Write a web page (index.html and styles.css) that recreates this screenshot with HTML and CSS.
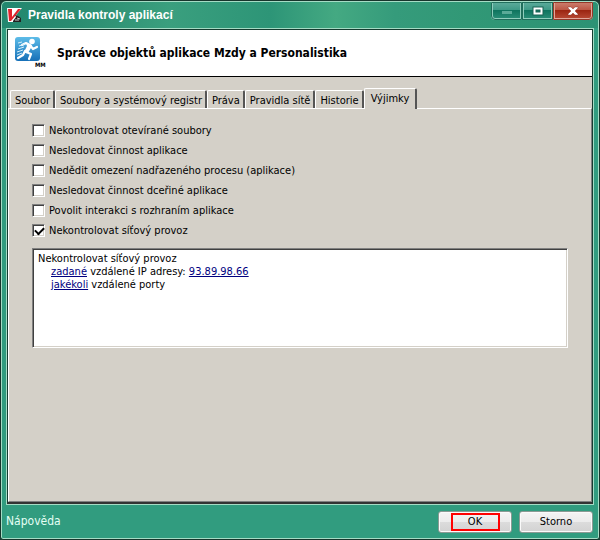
FILE: index.html
```html
<!DOCTYPE html>
<html lang="cs">
<head>
    <meta charset="UTF-8">
    <meta name="viewport" content="width=device-width, initial-scale=1.0">
    <title>Pravidla kontroly aplikací</title>
    <link rel="stylesheet" href="styles.css">
</head>
<body>
    <div class="window">
        <header class="titlebar">
            <svg class="logo" viewBox="0 0 16 16" aria-hidden="true">
                <path d="M0 1h15L9 8l5 7H1z" fill="#fff"/>
                <path d="M1 2h4v8l6-8h3L4 14H2z" fill="#e0222c"/>
                <path d="M6 14l3-4-1-2 3 1 3 2v4H6z" fill="#222"/>
                <path d="M10 11l3 1M8 13h4" stroke="#ccc" fill="none"/>
            </svg>
            <h1>Pravidla kontroly aplikací</h1>
            <div class="window-buttons">
                <button type="button" class="minimize" aria-label="Minimalizovat" disabled>
                    <svg viewBox="0 0 12 10"><path d="M1 5h10v3H1z" fill="#5aaa98"/></svg>
                </button>
                <button type="button" class="maximize" aria-label="Maximalizovat">
                    <svg viewBox="0 0 12 10"><path d="M2.5 2.5h7v5h-7z" fill="none" stroke="#1b6355" stroke-width="4"/><path d="M2.5 2.5h7v5h-7z" fill="none" stroke="#fff" stroke-width="2"/></svg>
                </button>
                <button type="button" class="close" aria-label="Zavřít">
                    <svg viewBox="0 0 12 10"><path d="M1 1h3l2 2 2-2h3v1L8 5l3 3v1H8L6 7 4 9H1V8l3-3-3-3z" fill="#fff" stroke="#7d2418" stroke-width=".4"/></svg>
                </button>
            </div>
        </header>

        <main class="content">
            <div class="heading">
                <svg class="app-icon" viewBox="0 0 32 32" aria-hidden="true">
                    <defs>
                        <linearGradient id="blue" x1="0" y1="0" x2="0" y2="1">
                            <stop offset="0" stop-color="#5dbce8"/>
                            <stop offset="1" stop-color="#1670b8"/>
                        </linearGradient>
                    </defs>
                    <rect x="0" y="0" width="25" height="24" rx="3" fill="url(#blue)"/>
                    <circle cx="17" cy="4.5" r="2.8" fill="#fff"/>
                    <path d="M7 8l4-2 4 2 3 4 4-2M11 15l5 2-2 5M10 14l-2 4-5 3" fill="none" stroke="#fff" stroke-width="2.2" stroke-linecap="round" stroke-linejoin="round"/>
                    <path d="M11 6l6 2-1 3-3 5-4-1 3-6z" fill="#fff"/>
                    <path d="M3 6l4-1M4 9l6-2M3 12l6-2M2 15l6-2M2 18l5-2" stroke="#d5effa" stroke-width="1"/>
                    <text class="app-icon-text" x="20" y="30">MM</text>
                </svg>
                <h2>Správce objektů aplikace Mzdy a Personalistika</h2>
            </div>

            <div class="tabs" role="tablist">
                <button type="button" role="tab" class="tab">Soubor</button>
                <button type="button" role="tab" class="tab">Soubory a systémový registr</button>
                <button type="button" role="tab" class="tab">Práva</button>
                <button type="button" role="tab" class="tab">Pravidla sítě</button>
                <button type="button" role="tab" class="tab">Historie</button>
                <button type="button" role="tab" class="tab active" aria-selected="true">Výjimky</button>
            </div>

            <div class="panel" role="tabpanel">
                <div class="options">
                    <label><input type="checkbox"> Nekontrolovat otevírané soubory</label>
                    <label><input type="checkbox"> Nesledovat činnost aplikace</label>
                    <label><input type="checkbox"> Nedědit omezení nadřazeného procesu (aplikace)</label>
                    <label><input type="checkbox"> Nesledovat činnost dceřiné aplikace</label>
                    <label><input type="checkbox"> Povolit interakci s rozhraním aplikace</label>
                    <label><input type="checkbox" checked> Nekontrolovat síťový provoz</label>
                </div>
                <div class="rule">
                    <p>Nekontrolovat síťový provoz</p>
                    <p class="indent"><a href="#">zadané</a> vzdálené IP adresy: <a href="#">93.89.98.66</a></p>
                    <p class="indent"><a href="#">jakékoli</a> vzdálené porty</p>
                </div>
            </div>
        </main>

        <footer class="footer">
            <a href="#" class="help">Nápověda</a>
            <button type="button" class="btn"><span class="mark">OK</span></button>
            <button type="button" class="btn">Storno</button>
        </footer>
    </div>
</body>
</html>
```

FILE: styles.css
```css
* {
    box-sizing: border-box;
}
body {
    margin: 0;
    background-color: #1c3a32;
    font-family: "DejaVu Sans Condensed", "DejaVu Sans", Tahoma, sans-serif;
    font-size: 11px;
    line-height: 13px;
    color: #000;
}
h1, h2, p {
    margin: 0;
}
button {
    font: inherit;
    color: inherit;
    padding: 0;
}
.window {
    display: flex;
    flex-direction: column;
    min-height: 100vh;
    padding: 0 5px;
    border: 1px solid #17352c;
    border-radius: 6px 6px 3px 3px;
    box-shadow: inset 0 0 0 1px #a5dcc5;
    background-color: #319c7f;
}

/* Title bar */
.titlebar {
    display: flex;
    align-items: center;
    height: 26px;
    margin: 1px -4px 0;
    padding: 0 5px;
    border-radius: 5px 5px 0 0;
    background: linear-gradient(90deg, #22876f, #2a8c70 12%, #3a9f7e 28%, #2d9577 45%, #44a982 56%, #359b7b 66%, #319876 78%, #2c9274);
}
.logo {
    width: 16px;
    height: 16px;
}
.titlebar h1 {
    flex: 1;
    margin-left: 5px;
    font-family: "Liberation Sans", Arial, sans-serif;
    font-size: 12px;
    line-height: 16px;
    color: #fff;
}
.window-buttons {
    display: flex;
    align-self: flex-start;
}
.window-buttons button {
    display: flex;
    align-items: center;
    justify-content: center;
    width: 31px;
    height: 18px;
    border: 1px solid #8fcdbc;
    border-top: 0;
    outline: 1px solid #206e5c;
    outline-offset: -1px;
    background: linear-gradient(#5eac9c, #3f9a87 45%, #0f745f 50%, #2a8f78);
    box-shadow: inset 0 0 0 1px #8fcdbc;
}
.window-buttons svg {
    width: 12px;
    height: 10px;
}
.window-buttons .minimize {
    border-radius: 0 0 0 4px;
}
.window-buttons .close {
    width: 40px;
    border-radius: 0 0 4px 0;
    outline-color: #943829;
    background: linear-gradient(#cd8171, #bd5745 45%, #9c2612 50%, #b84a35);
    box-shadow: inset 0 0 0 1px #e0a79b;
}

/* Client area */
.content {
    display: flex;
    flex-direction: column;
    flex: 1;
    margin: 1px 1px 0;
    border: 1px solid #163c30;
    border-bottom: 2px solid #333;
    outline: 1px solid #a5dcc5;
    background-color: #d4d0c8;
}
.heading {
    display: flex;
    align-items: center;
    height: 47px;
    padding: 0 7px;
    border-bottom: 1px solid #000;
    background-color: #fff;
}
.app-icon {
    width: 32px;
    height: 32px;
}
.app-icon-text {
    font-size: 6px;
    font-weight: bold;
}
.heading h2 {
    margin-left: 10px;
    font-size: 12px;
    line-height: 16px;
}

/* Tabs */
.tabs {
    display: flex;
    align-items: flex-end;
    padding: 11px 2px 0;
}
.tab {
    height: 18px;
    padding: 1px 3px 0 4px;
    border: 1px solid #fff;
    border-right: 2px solid #555;
    border-bottom: 0;
    border-radius: 2px 2px 0 0;
    background-color: #d4d0c8;
    white-space: nowrap;
}
.tab.active {
    height: 21px;
    margin-bottom: -1px;
    padding: 0 6px 1px;
    z-index: 1;
}
.panel {
    flex: 1;
    padding: 11px 23px;
    border: 1px solid #fff;
    border-right-color: #808080;
    border-bottom-color: #808080;
}
.options label {
    display: flex;
    align-items: center;
    gap: 4px;
    height: 20px;
}
.options input {
    appearance: none;
    width: 13px;
    height: 13px;
    margin: 0;
    border: 1px solid;
    border-color: #808080 #fff #fff #808080;
    background-color: #fff;
    box-shadow: inset 1px 1px 0 #404040, inset -1px -1px 0 #d4d0c8;
}
.options input:checked::before {
    content: "";
    display: block;
    width: 7px;
    height: 4px;
    margin: 2px;
    border: solid #000;
    border-width: 0 0 2px 2px;
    transform: rotate(-45deg);
}
.rule {
    height: 100px;
    margin-top: 8px;
    padding: 3px 5px;
    border: 1px solid;
    border-color: #808080 #fff #fff #808080;
    background-color: #fff;
    box-shadow: inset 1px 1px 0 #404040, inset -1px -1px 0 #d4d0c8;
}
.rule .indent {
    padding-left: 13px;
}
.rule a {
    color: #000080;
}

/* Bottom bar */
.footer {
    display: flex;
    align-items: center;
    gap: 7px;
    height: 35px;
    padding-right: 1px;
}
.help {
    flex: 1;
    font-size: 12px;
    color: #e4fff4;
    text-decoration: none;
}
.btn {
    display: flex;
    align-items: center;
    justify-content: center;
    width: 74px;
    height: 22px;
    border: 1px solid #8b9a94;
    border-radius: 3px;
    background: linear-gradient(#f4f4f4, #ececec 48%, #dcdcdc 50%, #d2d2d2);
    box-shadow: inset 0 0 0 1px #fafafa;
}
.mark {
    width: 49px;
    border: 2px solid #f00;
    line-height: 14px;
}
```
